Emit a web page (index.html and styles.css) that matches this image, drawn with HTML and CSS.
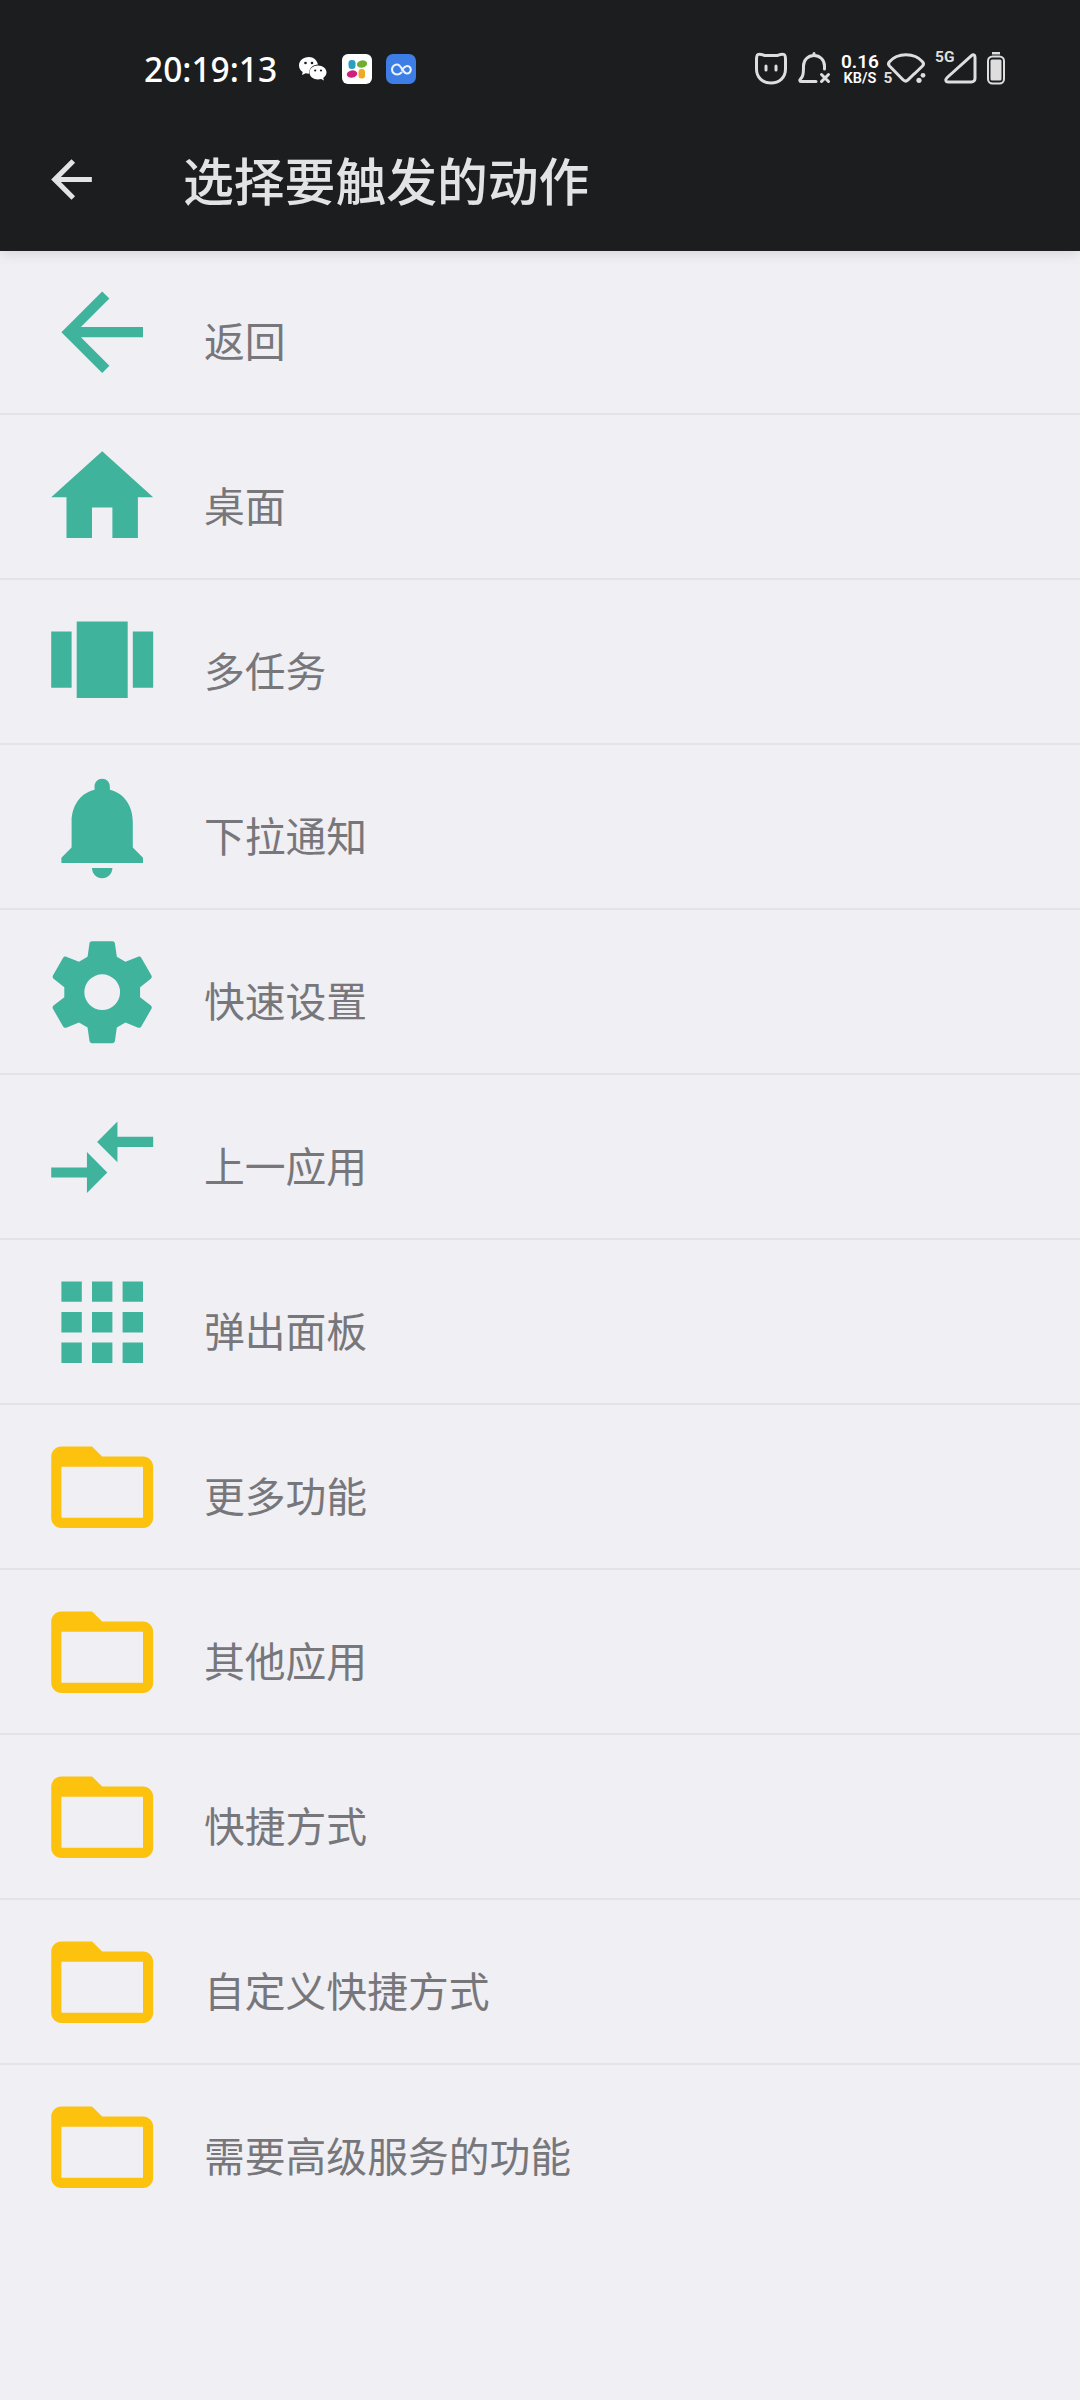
FILE: index.html
```html
<!DOCTYPE html>
<html lang="zh-CN">
<head>
<meta charset="utf-8">
<title>选择要触发的动作</title>
<link rel="stylesheet" href="styles.css">
</head>
<body>
<svg class="defs" aria-hidden="true">
  <symbol id="folder" viewBox="0 0 24 24"><path d="M20 6h-8l-2-2H4c-1.100 0-1.990.9-1.990 2L2 18c0 1.100.9 2 2 2h16c1.100 0 2-.9 2-2V8c0-1.100-.9-2-2-2zm0 12H4V8h16v10z"/></symbol>
</svg>
<header class="header">
  <div class="status">
    <span class="clock">20:19:13</span>
    <div class="apps">
      <svg class="wechat" viewBox="0 0 30 26"><path fill="#fff" d="M11 1C5 1 1 4.700 1 9.500c0 2.700 1.400 5 3.700 6.500L4 19l3.600-1.700c1.100.3 2.300.4 3.500.4C11 12 15 8.500 20 8.500C19 4 15.500 1 11 1z"/><path fill="#fff" d="M20 9.500c-4.800 0-8.500 3-8.500 7s3.700 7 8.500 7c1.100 0 2.200-.2 3.100-.5L26 24.500l-.8-2.600c2-1.300 3.300-3.200 3.300-5.400 0-4-3.700-7-8.500-7z"/><g fill="#1b1d1f"><circle cx="7.500" cy="7" r="1.300"/><circle cx="14" cy="7" r="1.300"/><circle cx="17.200" cy="14.500" r="1.100"/><circle cx="23" cy="14.500" r="1.100"/></g></svg>
      <svg class="app" viewBox="0 0 30 30"><rect width="30" height="30" rx="6" fill="#fff"/><rect x="6.500" y="6" width="7" height="9" rx="3.300" fill="#2b9fc0"/><ellipse cx="20" cy="10" rx="5.200" ry="3.700" fill="#6fae35" transform="rotate(-12 20 10)"/><ellipse cx="10" cy="20" rx="5.300" ry="3.700" fill="#d0207d" transform="rotate(-12 10 20)"/><rect x="16.500" y="15" width="6.500" height="9.500" rx="3" fill="#efaa22"/></svg>
      <svg class="app" viewBox="0 0 30 30"><rect width="30" height="30" rx="7" fill="#3f7de6"/><path d="M15.500 18.500c-1.500 1.500-3 2-4.500 2a5 5 0 1 1 0-10c4.800 0 5.500 9 10 9a3.500 3.500 0 0 0 0-7.500c-2.500 0-3.500 2-5 4" fill="none" stroke="#e8f4ff" stroke-width="2.100" stroke-linecap="round"/></svg>
    </div>
    <div class="signals">
      <svg class="cat" viewBox="0 0 34 34"><path d="M4 2.500C6 1.500 9 3 10.500 3.500h13C25 3 28 1.500 30 2.500c1.800 1 1.500 4 1.500 6V17c0 9-6.500 14-14.500 14S2.500 26 2.500 17V8.500c0-2-.3-5 1.500-6z"/><path d="M12 14v4M22 14v4"/></svg>
      <svg class="mute" viewBox="0 0 33 34"><path d="M18 29.500H3c-1.500 0-1.500-1.500-.5-2.500C5 24.500 5.500 22 5.500 14c0-6 4.500-10.500 10.500-10.500S26.500 8 26.500 14v3M16 3V1.500"/><path d="M23.500 22.500l7 7m0-7l-7 7"/></svg>
      <div class="rate"><span class="rate-num">0.16</span><span class="rate-unit">KB/S</span></div>
      <svg class="wifi" viewBox="0 0 44 34"><path d="M31.500 21.500L25 27.800c-1.500 1.500-3.500 1.500-5 0L6.500 14c-1.200-1.300-1.200-3 0-4.300C10.500 5 16 2.700 23 2.700s12.500 2.300 16.500 7c1.200 1.300 1.200 3 0 4.300l-8 7.800"/><g class="dots"><circle cx="36" cy="28.300" r="2.600"/><circle cx="40" cy="23.300" r="2.400"/></g><text x="0.500" y="31">5</text></svg>
      <svg class="cell" viewBox="0 0 43 36"><path d="M36.500 4.700L12.200 26.500c-2.300 2.200-1.700 4.500 1.300 4.500h23c2 0 3.500-1.500 3.500-3.500V6.200c0-2.500-1.800-3-3.500-1.500z"/><text x="0" y="11">5G</text></svg>
      <svg class="battery" viewBox="0 0 20 34"><path class="dots" d="M6 0h8v2.500H6z"/><rect x="2" y="4.500" width="16" height="27" rx="4.500"/><rect class="dots" x="4.500" y="7.500" width="11" height="21" rx="1.500"/></svg>
    </div>
  </div>
  <div class="toolbar">
    <svg class="back" viewBox="0 0 24 24"><path d="M20 11H7.830l5.590-5.590L12 4l-8 8 8 8 1.410-1.410L7.830 13H20v-2z"/></svg>
    <h1 class="title">选择要触发的动作</h1>
  </div>
</header>
<main class="list">
  <div class="row"><svg class="icon" viewBox="0 0 24 24"><path d="M20 11H7.830l5.590-5.590L12 4l-8 8 8 8 1.410-1.410L7.830 13H20v-2z"/></svg><span class="label">返回</span></div>
  <div class="row"><svg class="icon" viewBox="0 0 24 24"><path d="M10 20v-6h4v6h5v-8h3L12 3 2 12h3v8z"/></svg><span class="label">桌面</span></div>
  <div class="row"><svg class="icon" viewBox="0 0 24 24"><path d="M7 19h10V4H7v15zm-5-2h4V6H2v11zM18 6v11h4V6h-4z"/></svg><span class="label">多任务</span></div>
  <div class="row"><svg class="icon" viewBox="0 0 24 24"><path d="M12 22c1.100 0 2-.9 2-2h-4c0 1.100.89 2 2 2zm6-6v-5c0-3.070-1.640-5.640-4.500-6.320V4c0-.83-.67-1.500-1.500-1.500s-1.500.67-1.500 1.500v.68C7.630 5.360 6 7.920 6 11v5l-2 2v1h16v-1l-2-2z"/></svg><span class="label">下拉通知</span></div>
  <div class="row"><svg class="icon" viewBox="0 0 24 24"><path d="M19.430 12.980l2.110 1.650c.19.150.24.420.12.640l-2 3.460c-.12.220-.39.300-.61.220l-2.490-1-1.690.98-.38 2.650c-.03.240-.24.420-.49.420h-4c-.25 0-.46-.18-.49-.42l-.38-2.650-1.690-.98-2.490 1c-.23.090-.49 0-.61-.22l-2-3.460c-.13-.22-.07-.49.120-.64l2.110-1.650v-1.960L2.460 9.370c-.19-.15-.24-.42-.12-.64l2-3.460c.12-.22.39-.3.610-.22l2.490 1 1.690-.98.380-2.650C9.540 2.180 9.750 2 10 2h4c.25 0 .46.180.49.420l.38 2.650 1.690.98 2.490-1c.23-.09.49 0 .61.220l2 3.460c.12.220.07.490-.12.640l-2.110 1.650zM12 8.500a3.500 3.500 0 1 0 0 7 3.500 3.500 0 0 0 0-7z"/></svg><span class="label">快速设置</span></div>
  <div class="row"><svg class="icon" viewBox="0 0 24 24"><path d="M9.010 14H2v2h7.010v3L13 15l-3.990-4v3zm5.980-1v-3H22V8h-7.010V5L11 9l3.990 4z"/></svg><span class="label">上一应用</span></div>
  <div class="row"><svg class="icon" viewBox="0 0 24 24"><path d="M4 8h4V4H4v4zm6 12h4v-4h-4v4zm-6 0h4v-4H4v4zm0-6h4v-4H4v4zm6 0h4v-4h-4v4zm6-10v4h4V4h-4zm-6 4h4V4h-4v4zm6 6h4v-4h-4v4zm0 6h4v-4h-4v4z"/></svg><span class="label">弹出面板</span></div>
  <div class="row"><svg class="icon folder"><use href="#folder"/></svg><span class="label">更多功能</span></div>
  <div class="row"><svg class="icon folder"><use href="#folder"/></svg><span class="label">其他应用</span></div>
  <div class="row"><svg class="icon folder"><use href="#folder"/></svg><span class="label">快捷方式</span></div>
  <div class="row"><svg class="icon folder"><use href="#folder"/></svg><span class="label">自定义快捷方式</span></div>
  <div class="row"><svg class="icon folder"><use href="#folder"/></svg><span class="label">需要高级服务的功能</span></div>
</main>
</body>
</html>
```
FILE: styles.css
```css
* { box-sizing: border-box; }
body {
  margin: 0;
  min-height: 2400px;
  background: #f0eff4;
  font-family: "Noto Sans CJK SC", sans-serif;
}
.defs { display: none; }
.header {
  height: 251px;
  background: #1b1d1f;
  box-shadow: 0 3px 12px rgba(0, 0, 0, .1);
}
.status {
  display: flex;
  align-items: center;
  height: 138px;
  padding: 0 74px 0 144px;
  color: #e4e4e6;
  font-family: "Noto Sans", sans-serif;
}
.clock {
  width: 154px;
  color: #fff;
  font-size: 33.500px;
  font-weight: 500;
  line-height: 40px;
  white-space: nowrap;
}
.apps { display: flex; align-items: center; gap: 14px; }
.wechat { width: 30px; height: 26px; }
.app { width: 30px; height: 30px; }
.signals { display: flex; align-items: center; margin-left: auto; }
.signals svg {
  overflow: visible;
  fill: none;
  stroke: #dededf;
  stroke-width: 3;
  stroke-linecap: round;
  stroke-linejoin: round;
}
.signals .dots, .signals text { fill: #dededf; stroke: none; }
.signals text { font-family: Roboto, sans-serif; font-weight: 700; font-size: 15.500px; }
.cat { width: 34px; height: 34px; }
.mute { width: 33px; height: 34px; margin-left: 10px; }
.rate {
  display: flex;
  flex-direction: column;
  align-items: center;
  width: 38px;
  margin-left: 10px;
  padding-top: 1px;
  color: #fff;
  font-family: Roboto, sans-serif;
  font-weight: 600;
  white-space: nowrap;
}
.rate-num { font-size: 19px; line-height: 18px; }
.rate-unit { font-size: 14.500px; line-height: 15px; }
.wifi { width: 44px; height: 34px; margin-left: 4px; }
.cell { width: 43px; height: 36px; margin-left: 8px; }
.battery { width: 20px; height: 34px; margin-left: 8px; }
.signals .battery { stroke-width: 2; }
.toolbar {
  display: flex;
  align-items: center;
  height: 82px;
  padding-left: 41px;
}
.back { width: 61px; height: 61px; fill: #e2e3e5; }
.title {
  margin: 0 0 0 81px;
  color: #e2e3e5;
  font-size: 50.800px;
  font-weight: 500;
  line-height: 82px;
}
.list { display: flex; flex-direction: column; margin-top: -1px; }
.row {
  display: flex;
  align-items: center;
  height: 165px;
  padding: 2px 41px 0;
  border-bottom: 2px solid #e4e3e8;
}
.row:last-child { border-bottom-color: transparent; }
.icon { width: 122.400px; height: 122.400px; fill: #3fb39c; }
.icon.folder { fill: #fcc20e; }
.label {
  margin: 14px 0 0 40.600px;
  color: #77777b;
  font-size: 40.800px;
  line-height: 58px;
}
```
